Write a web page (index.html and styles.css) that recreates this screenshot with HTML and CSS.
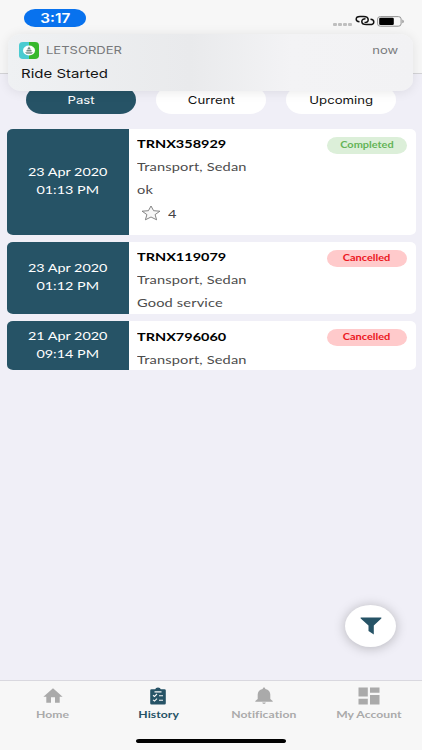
FILE: index.html
```html
<!DOCTYPE html>
<html lang="en">
<head>
<meta charset="utf-8">
<title>Ride history</title>
<link rel="stylesheet" href="styles.css">
</head>
<body>
<div class="screen">
  <header class="status">
    <div class="clock"><span class="wide center">3:17</span></div>
    <div class="indicators">
      <i></i><i></i><i></i><i></i>
      <svg class="link" viewBox="0 0 20 12" fill="none" stroke="#111" stroke-width="1.5"><path d="M4.500 6.800C2.500 6.600 1.200 5.500 1.200 4.200C1.200 2.500 2.800 1.500 5 1.500H8.500C11.300 1.500 13.200 2.700 13.200 4.700C13.200 6.500 11.500 7.500 9.500 7.500"/><path d="M15.500 4.300C17.500 4.500 18.800 5.500 18.800 6.900C18.800 8.600 17.200 9.600 15 9.600H11.500C8.700 9.600 6.800 8.500 6.800 6.500C6.800 4.700 8.500 3.800 10.500 3.800"/></svg>
      <svg class="battery" viewBox="0 0 27 11"><rect x=".6" y=".6" width="23.500" height="9.600" rx="2.800" ry="2.300" fill="none" stroke="#929292"/><rect x="2.200" y="1.800" width="14.600" height="7.200" rx="1.300" fill="#000"/><path d="M25.400 3.600Q26.700 4 26.700 5.400T25.400 7.200Z" fill="#888"/></svg>
    </div>
  </header>

  <nav class="filters">
    <a class="pill active"><span class="wide center">Past</span></a>
    <a class="pill"><span class="wide center">Current</span></a>
    <a class="pill"><span class="wide center">Upcoming</span></a>
  </nav>

  <main class="list">
    <article class="card tall">
      <div class="date"><span class="wide center">23 Apr 2020</span><span class="wide center">01:13 PM</span></div>
      <div class="info">
        <div class="id"><span class="wide">TRNX358929</span></div>
        <div class="line"><span class="wide">Transport, Sedan</span></div>
        <div class="line"><span class="wide">ok</span></div>
        <div class="rating"><svg viewBox="0 0 20 16" fill="#f7f7f7" stroke="#777" stroke-width=".9"><path d="M10 1L12.600 5.700 18.900 6.200 14.100 9.600 15.600 14.800 10 12 4.400 14.800 5.900 9.600 1.100 6.200 7.400 5.700Z"/></svg><span class="wide">4</span></div>
      </div>
      <div class="badge done"><span class="wide center">Completed</span></div>
    </article>
    <article class="card medium">
      <div class="date"><span class="wide center">23 Apr 2020</span><span class="wide center">01:12 PM</span></div>
      <div class="info">
        <div class="id"><span class="wide">TRNX119079</span></div>
        <div class="line"><span class="wide">Transport, Sedan</span></div>
        <div class="line"><span class="wide">Good service</span></div>
      </div>
      <div class="badge cancelled"><span class="wide center">Cancelled</span></div>
    </article>
    <article class="card short">
      <div class="date"><span class="wide center">21 Apr 2020</span><span class="wide center">09:14 PM</span></div>
      <div class="info">
        <div class="id"><span class="wide">TRNX796060</span></div>
        <div class="line"><span class="wide">Transport, Sedan</span></div>
      </div>
      <div class="badge cancelled"><span class="wide center">Cancelled</span></div>
    </article>
  </main>

  <nav class="tabs">
    <a class="tab"><svg viewBox="0 0 20 18"><path d="M10 1.200L19.600 9.700H16.700V15.700H12V10.300H8V15.700H3.300V9.700H.4Z"/></svg><span class="wide center">Home</span></a>
    <a class="tab on"><svg viewBox="0 0 16 18"><path d="M1.500 2.300H5.200Q5.600.4 8 .4T10.800 2.300H14.500Q15.800 2.300 15.800 3.500V16.200Q15.800 17.400 14.500 17.400H1.500Q.2 17.400.2 16.200V3.500Q.2 2.300 1.500 2.300Z"/><path d="M4.500 4.900H11.500M3 8.200L4.500 9.400 7 7M3 12.900L4.500 14.100 7 11.700M9 8.700H13M9 13.200H13" fill="none" stroke="#f7f7f7" stroke-width="1.100"/></svg><span class="wide center">History</span></a>
    <a class="tab"><svg viewBox="0 0 18 18"><path d="M9 .5Q10.300.5 10.300 1.900C13.700 2.500 15.300 4.800 15.300 7.500V12L17.700 14V14.700H.3V14L2.700 12V7.500C2.700 4.800 4.300 2.500 7.700 1.900Q7.700.5 9 .5ZM7.200 15.500H10.800Q10.600 16.900 9 16.900T7.200 15.500Z"/></svg><span class="wide center">Notification</span></a>
    <a class="tab"><svg viewBox="0 0 22 18" class="tiles"><path d="M.5.500H9.800V9.600H.5ZM12 .5H21.500V5.800H12ZM.5 11.700H9.800V17.500H.5ZM12 8H21.500V17.500H12Z"/></svg><span class="wide center">My Account</span></a>
  </nav>

  <section class="notice">
    <div class="notice-head">
      <svg class="app" viewBox="0 0 20 17"><defs><clipPath id="a"><rect width="20" height="17" rx="4" ry="3.400"/></clipPath></defs><g clip-path="url(#a)"><path d="M0 0H10V17H0Z" fill="#4bcbd1"/><path d="M10 0H20V17H10Z" fill="#37b82d"/><ellipse cx="10" cy="8.500" rx="6" ry="5" fill="#fff"/><path d="M10 4.500L12 7.500H8ZM7.500 8H12.500V9.500H7.500ZM6 10.300H14L12.500 11.800H7.500Z" fill="#768b83"/></g></svg>
      <span class="wide brand">LETSORDER</span>
      <span class="wide when">now</span>
    </div>
    <div class="message"><span class="wide">Ride Started</span></div>
  </section>
  <button class="fab" aria-label="Filter"><svg viewBox="0 0 22 18"><path d="M1 .5H21Q21.800.7 21.300 1.600L13.800 8.500V17.400L8.500 14V8.500L.7 1.600Q.2.700 1 .5Z"/></svg></button>
  <div class="home-bar"></div>
</div>
</body>
</html>
```
FILE: styles.css
```css
* { box-sizing: border-box; }
body { margin: 0; font-family: Lato, "Liberation Sans", sans-serif; }
svg { display: block; flex: none; }
.screen { position: relative; width: 422px; height: 750px; overflow: hidden; background: #f0eff7; display: flex; flex-direction: column; }
.wide { display: inline-block; white-space: nowrap; transform: scaleX(1.218); transform-origin: left center; }
.center { transform-origin: center; }

.status { height: 74px; flex: none; padding: 9px 18px 0 24px; display: flex; justify-content: space-between; align-items: flex-start; background: #f7f7f7; border-bottom: 1px solid #d3d3d6; }
.clock { width: 62px; height: 18px; border-radius: 11px / 9px; background: #0872ee; color: #fff; font: 600 12.600px/19px Inter, sans-serif; text-align: center; }
.indicators { display: flex; align-items: center; padding-top: 6px; }
.indicators i { width: 4px; height: 3px; margin-right: 1px; border-radius: 1px; background: #bfbfbf; margin-top: 6px; }
.link { width: 20px; height: 12px; margin: 0 2px 0 2px; }
.battery { width: 27px; height: 11px; }

.filters { height: 54.500px; flex: none; padding: 12px 26px 0; display: flex; justify-content: space-between; }
.pill { width: 110px; height: 28px; border-radius: 16px / 14px; background: #fff; color: #111; font: 400 10.800px/29px Inter, sans-serif; text-align: center; }
.pill.active { background: #265366; color: #fff; }

.list { flex: 1; padding: 0 6.500px; display: flex; flex-direction: column; gap: 6.500px; }
.card { position: relative; display: flex; background: #fff; border-radius: 6px / 5px; overflow: hidden; }
.tall { height: 106.500px; }
.medium { height: 72.700px; }
.short { height: 49.500px; }
.date { width: 122.500px; padding-bottom: 1px; background: #265366; color: #fff; display: flex; flex-direction: column; align-items: center; justify-content: center; font-size: 11.800px; line-height: 18px; }
.info { padding: 3px 0 0 8px; }
.short .info { padding-top: 4px; }
.id { font-size: 11.900px; font-weight: 700; line-height: 23px; color: #000; }
.line { font-size: 12px; letter-spacing: .12px; line-height: 23px; color: #4c4c4c; }
.rating { display: flex; align-items: center; gap: 7px; height: 25px; padding-left: 4px; font-size: 12px; color: #444; }
.rating svg { width: 20px; height: 16px; }
.badge { position: absolute; right: 8.700px; top: 8.200px; width: 80px; height: 17px; border-radius: 10px / 8.5px; text-align: center; font-size: 9px; font-weight: 700; line-height: 16.500px; }
.done { background: #dcefd9; color: #64b457; }
.cancelled { background: #ffcacb; color: #ec1722; }

.tabs { height: 70px; flex: none; padding-top: 6px; border-top: 1px solid #d9d8df; background: #f7f7f7; display: grid; grid-template-columns: repeat(4, 1fr); }
.tab { display: flex; flex-direction: column; align-items: center; color: #aaa; font-size: 10px; font-weight: 700; letter-spacing: .04px; line-height: 18px; }
.tab svg { width: 20px; height: 18px; fill: currentColor; }
.tab .tiles { width: 22px; }
.tab.on { color: #265366; }

.notice { position: absolute; left: 8px; top: 34px; width: 405px; height: 56.500px; border-radius: 14px / 11px; background: linear-gradient(90deg, #eff1f3, #e9eaec 45%, #f3f3f5 70%, #f2f2f4); box-shadow: 0 1px 12px rgba(0,0,0,.09); padding: 8px 15px 0 11px; }
.notice-head { display: flex; align-items: center; height: 17px; font: 400 10.700px/19px Inter, sans-serif; color: #77797b; }
.app { width: 20px; height: 17px; }
.brand { margin-left: 7px; line-height: 19px; }
.when { margin-left: auto; transform-origin: right center; }
.message { padding: 5px 0 0 2px; font: 400 12.300px/20px Inter, sans-serif; color: #151515; }

.fab { position: absolute; left: 345px; top: 605px; width: 51px; height: 42px; padding: 0; border: 0; border-radius: 50%; background: #fff; box-shadow: 0 1px 12px rgba(0,0,0,.25); display: grid; place-items: center; }
.fab svg { width: 22px; height: 18px; fill: #265366; }
.home-bar { position: absolute; left: 136px; top: 739px; width: 150px; height: 4px; border-radius: 3px / 2px; background: #000; }
```
